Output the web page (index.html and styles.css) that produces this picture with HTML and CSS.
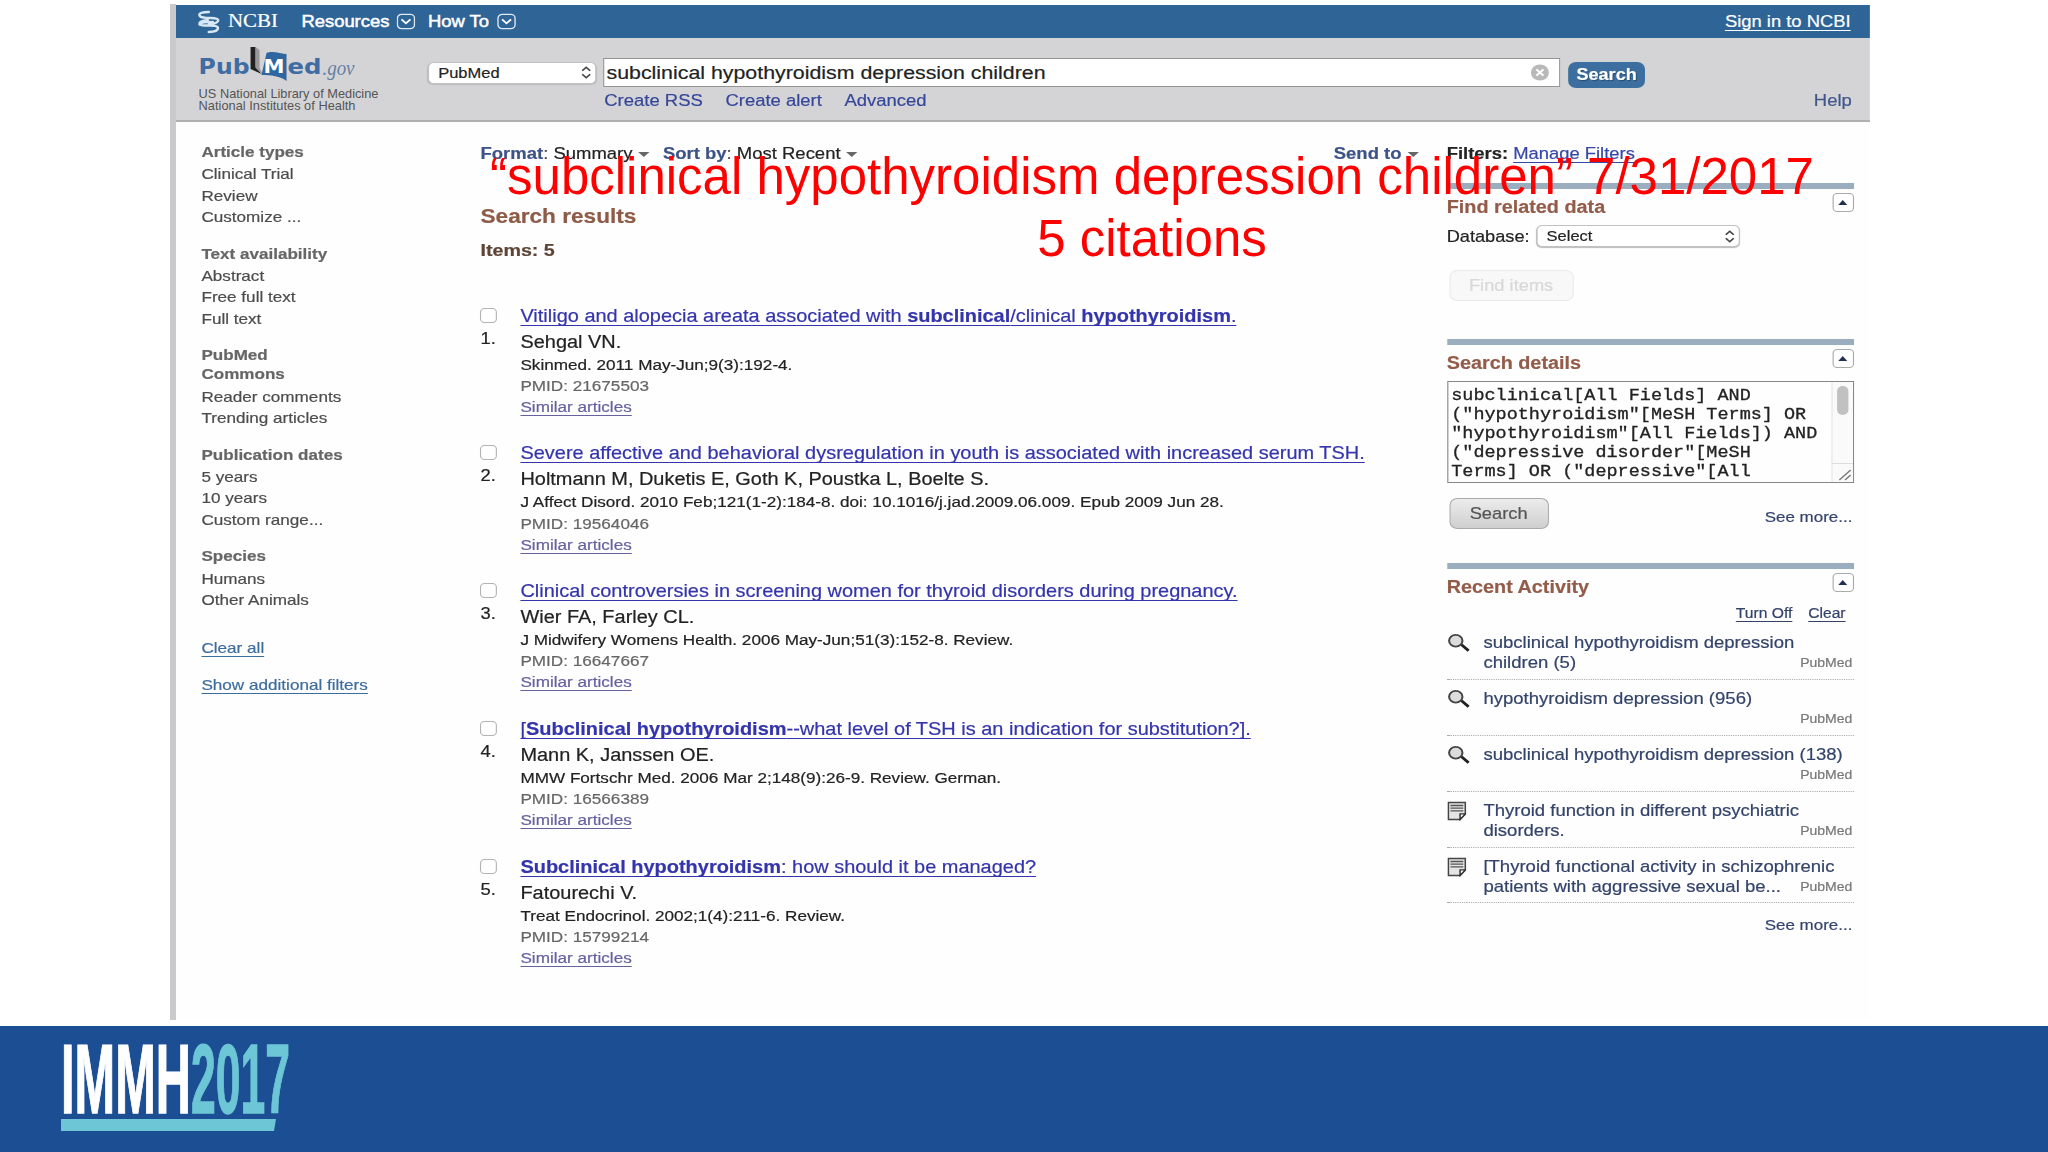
FILE: index.html
```html
<!DOCTYPE html>
<html lang="en">
<head>
<meta charset="UTF-8">
<meta name="viewport" content="width=device-width, initial-scale=1.0">
<title>subclinical hypothyroidism depression children - PubMed</title>
<link rel="stylesheet" href="styles.css">
</head>
<body>
<!-- shared icons -->
<svg class="defs" width="0" height="0">
    <symbol id="updown" viewBox="0 0 10 13">
        <path d="M1.5 4.8L5 1.3l3.5 3.5M1.5 8.2L5 11.7l3.5-3.5" fill="none" stroke="#444" stroke-width="1.6"/>
    </symbol>
    <symbol id="chevron" viewBox="0 0 18 17">
        <rect x="1" y="1" width="16" height="15" rx="4" fill="none" stroke="#dfe9f2" stroke-width="1.3"/>
        <path d="M4.8 6.2L9 10.4l4.2-4.2" fill="none" stroke="#fff" stroke-width="1.8"/>
    </symbol>
    <symbol id="glass" viewBox="0 0 22 20">
        <path d="M13.5 11.5l7.3 7" stroke="#222" stroke-width="3"/>
        <circle cx="8.3" cy="7.5" r="6.5" fill="#dcdcdc" stroke="#444" stroke-width="2"/>
    </symbol>
    <symbol id="doc" viewBox="0 0 18 20">
        <path d="M1 1h16v12l-5 6H1z" fill="#e4e4e4" stroke="#444" stroke-width="1.6"/>
        <path d="M3 4.2h12M3 7h12M3 9.8h12" stroke="#555" stroke-width="1.4"/>
        <path d="M17 13h-5v6z" fill="#fff" stroke="#333" stroke-width="1.4"/>
    </symbol>
</svg>

<div class="slide">
    <div class="shot">
    <div class="page">
        <div class="topbar">
            <svg class="helix" viewBox="0 0 22 24" preserveAspectRatio="none">
                <path d="M11 2C5 2 1 3 2 5.500S8 8 13 8s8 1 7 3-5 3-9 3M2 14.500c3-4 9-2 13-2.500M11 22c6 0 9-2 9-4s-4-2.500-9-2.500-9 0-9-2 3-3 8-3.500" fill="none" stroke="#d6e7f5" stroke-width="2.4" stroke-linecap="round"/>
            </svg>
            <span class="ncbi">NCBI</span>
            <span class="menu">Resources</span><svg class="chev"><use href="#chevron"/></svg>
            <span class="menu howto">How To</span><svg class="chev"><use href="#chevron"/></svg>
            <a class="signin" href="#">Sign in to NCBI</a>
        </div>

        <div class="searchbar">
            <svg class="logo" viewBox="0 0 190 70" preserveAspectRatio="none">
                <g font-family="DejaVu Sans" font-weight="bold" font-size="22" fill="#3f6da3">
                    <text x="0" y="29" textLength="51" lengthAdjust="spacingAndGlyphs">Pub</text>
                    <text x="89" y="29" textLength="34" lengthAdjust="spacingAndGlyphs">ed</text>
                </g>
                <path d="M52 2l5 0v20l6 7-11-5z" fill="#222"/>
                <path d="M57 2l4 3v18l3 6-7-6z" fill="#999"/>
                <path d="M68 8c6-3 15 1 20 1v27c-6-5-16-6-25-6z" fill="#2f66a0"/>
                <text x="65" y="28" font-family="DejaVu Sans" font-weight="bold" font-size="20" fill="#fff" textLength="21" lengthAdjust="spacingAndGlyphs">M</text>
                <text x="124" y="30" font-family="Liberation Serif" font-style="italic" font-size="22" fill="#6580a2" textLength="32" lengthAdjust="spacingAndGlyphs">.gov</text>
                <g font-family="Liberation Sans" font-size="12.4" fill="#555">
                    <text x="0" y="53" textLength="180" lengthAdjust="spacingAndGlyphs">US National Library of Medicine</text>
                    <text x="0" y="65.5" textLength="157" lengthAdjust="spacingAndGlyphs">National Institutes of Health</text>
                </g>
            </svg>
            <div class="search">
                <div class="search-row">
                    <div class="select db">PubMed<svg class="arrows"><use href="#updown"/></svg></div>
                    <div class="query">subclinical hypothyroidism depression children
                        <svg class="clear" viewBox="0 0 18 18"><circle cx="9" cy="9" r="9" fill="#b9b9b9"/><path d="M5.5 5.5l7 7M12.5 5.5l-7 7" stroke="#fff" stroke-width="2.2"/></svg>
                    </div>
                    <div class="go">Search</div>
                </div>
                <div class="links">
                    <a>Create RSS</a><a>Create alert</a><a>Advanced</a><a class="help">Help</a>
                </div>
            </div>
        </div>

        <div class="content">
            <div class="filters">
                <h4>Article types</h4>
                <p>Clinical Trial</p><p>Review</p><p>Customize ...</p>
                <h4>Text availability</h4>
                <p>Abstract</p><p>Free full text</p><p>Full text</p>
                <h4>PubMed<br>Commons</h4>
                <p>Reader comments</p><p>Trending articles</p>
                <h4>Publication dates</h4>
                <p>5 years</p><p>10 years</p><p>Custom range...</p>
                <h4>Species</h4>
                <p>Humans</p><p>Other Animals</p>
                <div class="clear-all"><a href="#">Clear all</a></div>
                <div class="show-more"><a href="#">Show additional filters</a></div>
            </div>

            <div class="results">
                <div class="toolbar">
                    <span><b>Format</b>: <em>Summary</em><i class="tri"></i></span>
                    <span><b>Sort by</b>: <em>Most Recent</em><i class="tri"></i></span>
                    <span class="send"><b>Send to</b><i class="tri"></i></span>
                </div>
                <h2>Search results</h2>
                <h3>Items: 5</h3>

                <div class="item">
                    <div class="num"><i class="check"></i>1.</div>
                    <div>
                        <div class="title"><a href="#">Vitiligo and alopecia areata associated with <b>subclinical</b>/clinical <b>hypothyroidism</b>.</a></div>
                        <div class="authors">Sehgal VN.</div>
                        <div class="journal">Skinmed. 2011 May-Jun;9(3):192-4.</div>
                        <div class="pmid">PMID: 21675503</div>
                        <div class="similar"><a href="#">Similar articles</a></div>
                    </div>
                </div>
                <div class="item">
                    <div class="num"><i class="check"></i>2.</div>
                    <div>
                        <div class="title"><a href="#">Severe affective and behavioral dysregulation in youth is associated with increased serum TSH.</a></div>
                        <div class="authors">Holtmann M, Duketis E, Goth K, Poustka L, Boelte S.</div>
                        <div class="journal">J Affect Disord. 2010 Feb;121(1-2):184-8. doi: 10.1016/j.jad.2009.06.009. Epub 2009 Jun 28.</div>
                        <div class="pmid">PMID: 19564046</div>
                        <div class="similar"><a href="#">Similar articles</a></div>
                    </div>
                </div>
                <div class="item">
                    <div class="num"><i class="check"></i>3.</div>
                    <div>
                        <div class="title"><a href="#">Clinical controversies in screening women for thyroid disorders during pregnancy.</a></div>
                        <div class="authors">Wier FA, Farley CL.</div>
                        <div class="journal">J Midwifery Womens Health. 2006 May-Jun;51(3):152-8. Review.</div>
                        <div class="pmid">PMID: 16647667</div>
                        <div class="similar"><a href="#">Similar articles</a></div>
                    </div>
                </div>
                <div class="item">
                    <div class="num"><i class="check"></i>4.</div>
                    <div>
                        <div class="title"><a href="#">[<b>Subclinical hypothyroidism</b>--what level of TSH is an indication for substitution?].</a></div>
                        <div class="authors">Mann K, Janssen OE.</div>
                        <div class="journal">MMW Fortschr Med. 2006 Mar 2;148(9):26-9. Review. German.</div>
                        <div class="pmid">PMID: 16566389</div>
                        <div class="similar"><a href="#">Similar articles</a></div>
                    </div>
                </div>
                <div class="item">
                    <div class="num"><i class="check"></i>5.</div>
                    <div>
                        <div class="title"><a href="#"><b>Subclinical hypothyroidism</b>: how should it be managed?</a></div>
                        <div class="authors">Fatourechi V.</div>
                        <div class="journal">Treat Endocrinol. 2002;1(4):211-6. Review.</div>
                        <div class="pmid">PMID: 15799214</div>
                        <div class="similar"><a href="#">Similar articles</a></div>
                    </div>
                </div>
            </div>

            <div class="side">
                <div class="manage"><b>Filters:</b> <a href="#">Manage Filters</a></div>

                <div class="box related">
                    <div class="box-head"><h3>Find related data</h3><span class="toggle"></span></div>
                    <div class="database">Database:
                        <div class="select">Select<svg class="arrows"><use href="#updown"/></svg></div>
                    </div>
                    <div class="btn disabled">Find items</div>
                </div>

                <div class="box details">
                    <div class="box-head"><h3>Search details</h3><span class="toggle"></span></div>
                    <div class="textarea">
                        <pre>subclinical[All Fields] AND
("hypothyroidism"[MeSH Terms] OR
"hypothyroidism"[All Fields]) AND
("depressive disorder"[MeSH
Terms] OR ("depressive"[All</pre>
                        <div class="scroll">
                            <i class="thumb"></i>
                            <svg class="grip" viewBox="0 0 12 12"><path d="M1 11L11 1M6 11l5-5" stroke="#777" stroke-width="1.2"/></svg>
                        </div>
                    </div>
                    <div class="details-foot"><div class="btn">Search</div><span class="more">See more...</span></div>
                </div>

                <div class="box recent">
                    <div class="box-head"><h3>Recent Activity</h3><span class="toggle"></span></div>
                    <div class="switches"><a href="#">Turn Off</a><a href="#">Clear</a></div>
                    <ul>
                        <li><svg><use href="#glass"/></svg><p>subclinical hypothyroidism depression<br>children (5)</p><span>PubMed</span></li>
                        <li><svg><use href="#glass"/></svg><p>hypothyroidism depression (956)</p><span>PubMed</span></li>
                        <li><svg><use href="#glass"/></svg><p>subclinical hypothyroidism depression (138)</p><span>PubMed</span></li>
                        <li><svg class="doc"><use href="#doc"/></svg><p>Thyroid function in different psychiatric<br>disorders.</p><span>PubMed</span></li>
                        <li><svg class="doc"><use href="#doc"/></svg><p>[Thyroid functional activity in schizophrenic<br>patients with aggressive sexual be...</p><span>PubMed</span></li>
                    </ul>
                    <div class="more last">See more...</div>
                </div>
            </div>
        </div>
    </div>
    </div>

    <div class="caption">“subclinical hypothyroidism depression children” 7/31/2017<br>5 citations</div>

    <div class="footer">
        <svg class="immh" width="232" height="92" viewBox="0 0 232 92">
            <g font-family="Liberation Sans" font-weight="bold" font-size="98">
                <text x="0" y="69" fill="#fff" stroke="#fff" stroke-width="1.4" textLength="130" lengthAdjust="spacingAndGlyphs">IMMH</text>
                <text x="130" y="69" fill="#6dc6d6" stroke="#6dc6d6" stroke-width="1.4" textLength="99" lengthAdjust="spacingAndGlyphs">2017</text>
            </g>
            <path d="M0 75h215l-2 12H0z" fill="#6dc6d6"/>
        </svg>
    </div>
</div>
</body>
</html>
```
FILE: styles.css
```css
* {
    box-sizing: border-box;
}

body {
    margin: 0;
    background-color: #fff;
    font-family: "Liberation Sans", Arial, sans-serif;
    color: #222;
}

h2, h3, h4, p, ul, pre {
    margin: 0;
    padding: 0;
}

.defs {
    position: absolute;
}

.slide {
    position: relative;
    width: 2048px;
    height: 1152px;
    overflow: hidden;
    padding-top: 4px;
}

.shot {
    margin-left: 170px;
    width: 1700px;
    height: 1016px;
    border-left: 6px solid #c9c9ce;
    padding-top: 1px;
    background-color: #fefefe;
}

/* the screenshot is wider than its natural proportions */
.page {
    width: 1499px;
    transform: scaleX(1.13);
    transform-origin: 0 0;
    -webkit-text-stroke: 0.2px;
}

.topbar {
    display: flex;
    align-items: center;
    height: 33px;
    padding: 0 17px 0 19px;
    background-color: #2e6496;
    color: #fff;
    font-size: 16.3px;
}

.helix {
    width: 20px;
    height: 24px;
}

.ncbi {
    font-family: "Liberation Serif", serif;
    font-size: 18.5px;
    width: 43px;
    margin: 0 22px 0 7px;
}

.menu {
    width: 78px;
    margin-right: 6px;
    -webkit-text-stroke: 0.5px #fff;
}

.howto {
    width: 55px;
    margin-left: 11px;
}

.chev {
    width: 17px;
    height: 17px;
}

.signin {
    margin-left: auto;
    color: #fff;
    text-underline-offset: 3px;
}

.searchbar {
    display: flex;
    height: 84px;
    padding: 7px 16px 0 20px;
    background-color: #d4d4d6;
    border-bottom: 2px solid #b0b0b2;
}

.logo {
    width: 168px;
    height: 70px;
    margin-right: 35px;
}

.search {
    flex: 1;
    padding-top: 13px;
}

.search-row {
    display: flex;
    align-items: center;
    height: 29px;
}

.select {
    display: flex;
    align-items: center;
    justify-content: space-between;
    height: 22px;
    padding: 0 3px 0 8px;
    background-color: #fff;
    border: 1px solid #c2c2c4;
    border-radius: 5px;
    box-shadow: 0 1px 1px #bbb;
    font-size: 14.6px;
}

.db {
    width: 149px;
    margin-right: 6px;
}

.arrows {
    width: 10px;
    height: 13px;
}

.query {
    display: flex;
    align-items: center;
    justify-content: space-between;
    width: 847px;
    height: 29px;
    padding: 0 9px 0 2px;
    background-color: #fff;
    border: 1px solid #949494;
    font-size: 18.9px;
}

.clear {
    width: 16px;
    height: 17px;
}

.go {
    width: 68px;
    height: 26px;
    margin: 4px 0 0 7px;
    background-color: #3c6f9f;
    border-radius: 7px;
    color: #fff;
    font-size: 16px;
    font-weight: bold;
    line-height: 25px;
    text-align: center;
    text-shadow: 1px 1px 1px #24486b;
}

.links {
    display: flex;
    gap: 20px;
    padding-left: 156px;
    margin-top: 4px;
    color: #36479a;
    font-size: 16.35px;
    line-height: 19px;
}

.links .help {
    margin-left: auto;
    color: #40558c;
}

.content {
    display: flex;
    padding: 21px 0 0 22.5px;
}

.filters {
    width: 247px;
    color: #4c4c4c;
    font-size: 15.15px;
}

.filters h4 {
    margin: 15.9px 0 2px;
    color: #666;
    font-size: 15.1px;
    line-height: 19.3px;
}

.filters h4:first-child {
    margin-top: -1.2px;
}

.filters p,
.clear-all,
.show-more {
    line-height: 21.5px;
}

.clear-all {
    margin-top: 26.5px;
}

.show-more {
    margin-top: 15.3px;
}

.filters a {
    color: #3d6c9e;
    text-underline-offset: 3px;
}

.results {
    width: 855px;
}

.toolbar {
    display: flex;
    gap: 12px;
    color: #444;
    font-size: 16.35px;
    line-height: 20px;
}

.toolbar b {
    color: #3d5286;
}

.toolbar em {
    color: #222;
    font-style: normal;
}

.send {
    margin-left: auto;
    margin-right: 25px;
}

.tri {
    display: inline-block;
    margin: 0 0 2px 5px;
    border: 5px solid transparent;
    border-top-color: #666;
    border-bottom: 0;
}

.results h2 {
    margin-top: 41px;
    color: #8d5b47;
    font-size: 20px;
    line-height: 24px;
}

.results h3 {
    margin: 12px 0 42.5px;
    color: #5e4437;
    font-size: 17.4px;
    line-height: 20px;
}

.item {
    display: flex;
    height: 116.2px;
    margin-bottom: 21.6px;
}

.num {
    width: 35.3px;
    padding-top: 5px;
    font-size: 16.3px;
    line-height: 20px;
    text-indent: 2px;
}

.check {
    display: block;
    width: 15px;
    height: 15px;
    margin: 0 0 5px -0.5px;
    background-color: #fff;
    border: 1.5px solid #b3b3b3;
    border-radius: 4px;
}

.title {
    color: #3434ac;
    font-size: 17.67px;
    line-height: 26px;
    white-space: nowrap;
}

.title a {
    color: #3434ac;
    text-underline-offset: 3px;
    text-decoration-skip-ink: none;
}

.authors {
    font-size: 17.65px;
    line-height: 26px;
}

.journal,
.pmid,
.similar {
    font-size: 15.16px;
    line-height: 21.4px;
}

.journal {
    margin-top: -1px;
}

.pmid {
    color: #666;
}

.similar {
    margin-top: -0.6px;
}

.similar a {
    color: #6561a0;
    text-underline-offset: 3px;
}

.side {
    width: 360px;
    font-size: 16.1px;
}

.manage {
    font-size: 16.3px;
    line-height: 20px;
    margin-bottom: 20px;
}

.manage a {
    color: #3647a8;
    text-underline-offset: 3px;
}

.box {
    border-top: 6px solid #9aaec0;
}

.box-head {
    display: flex;
    justify-content: space-between;
    padding-top: 4px;
    height: 36px;
}

.box-head h3 {
    margin-top: 3px;
    color: #935c4a;
    font-size: 17.55px;
    line-height: 22px;
}

.toggle {
    width: 19px;
    height: 19px;
    padding: 6px 0 0 4px;
    background-color: #fff;
    border: 1px solid #aaa;
    border-radius: 4px;
}

.toggle::after {
    content: "";
    display: block;
    width: 0;
    border: 4.5px solid transparent;
    border-top: 0;
    border-bottom: 5px solid #223050;
}

.database {
    display: flex;
    align-items: center;
    gap: 6px;
    height: 22px;
}

.database .select {
    width: 180px;
}

.btn {
    width: 88px;
    height: 31px;
    margin-left: 2px;
    background: linear-gradient(#ececec, #cfcfcf);
    border: 1.5px solid #aaa;
    border-radius: 7px;
    color: #555;
    font-size: 16.2px;
    line-height: 28px;
    text-align: center;
}

.btn.disabled {
    width: 110px;
    margin-top: 23px;
    background: #f8f8f8;
    border-color: #ebebeb;
    color: #d8d8d8;
    line-height: 29px;
}

.details {
    margin-top: 38px;
}

.textarea {
    display: flex;
    justify-content: space-between;
    height: 102px;
    border: 1px solid #888;
}

.textarea pre {
    padding: 4px 0 0 3px;
    font-family: "Liberation Mono", monospace;
    font-size: 16.37px;
    line-height: 19px;
    -webkit-text-stroke: 0.3px #222;
}

.scroll {
    display: flex;
    flex-direction: column;
    align-items: center;
    justify-content: space-between;
    width: 19px;
    padding: 4px 0 1px;
    background: #fafafa;
    border-left: 1px solid #e6e6e6;
}

.thumb {
    width: 10px;
    height: 29px;
    background-color: #c1c1c1;
    border-radius: 5px;
}

.grip {
    width: 19px;
    height: 18px;
    padding: 5px 1px 0 6px;
    border-top: 1px solid #ddd;
}

.details-foot {
    display: flex;
    justify-content: space-between;
    margin-top: 15px;
}

.more {
    padding: 10px 1px 0 0;
    color: #33436a;
    font-size: 15px;
    line-height: 18px;
}

.recent {
    margin-top: 34px;
}

.switches {
    display: flex;
    justify-content: flex-end;
    gap: 14px;
    margin-top: -1px;
    padding-right: 7px;
    font-size: 13.85px;
    line-height: 18px;
}

.switches a {
    color: #33436a;
    text-underline-offset: 3px;
}

.recent ul {
    list-style: none;
    margin-top: 2px;
}

.recent li {
    display: grid;
    grid-template-columns: 32.5px 1fr;
    height: 55.9px;
    padding-top: 8px;
    border-bottom: 1px dotted #aaa;
}

.recent li svg {
    width: 20px;
    height: 20px;
    margin-top: 1px;
}

.recent li .doc {
    width: 17px;
}

.recent li p,
.recent li span {
    grid-row: 1;
    grid-column: 2;
    line-height: 20px;
}

.recent li p {
    color: #33436a;
    font-size: 16.4px;
    white-space: nowrap;
}

.recent li span {
    justify-self: end;
    padding: 21px 1px 0 0;
    color: #777;
    font-size: 12.4px;
}

.last {
    padding-top: 13px;
    text-align: right;
}

/* slide title lies over the screenshot */
.caption {
    position: absolute;
    left: 128px;
    top: 146px;
    width: 2048px;
    color: #f00;
    font-size: 51px;
    line-height: 62px;
    text-align: center;
}

.footer {
    height: 126px;
    margin-top: 6px;
    padding: 18px 0 0 61px;
    background-color: #1b4e92;
}

.immh {
    overflow: visible;
}
```
